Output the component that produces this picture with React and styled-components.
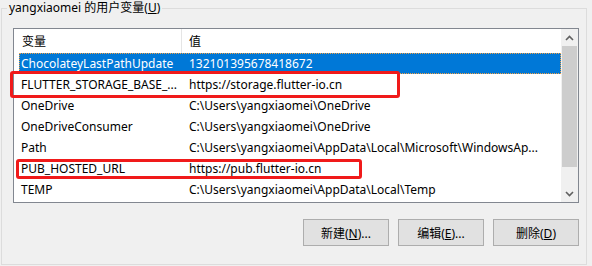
import React from 'react';
import styled, { createGlobalStyle } from 'styled-components';

const GlobalStyle = createGlobalStyle`
  html, body {
    margin: 0;
    padding: 0;
    background: #f0f0f0;
  }
  body {
    font-family: "Noto Sans", "Noto Sans CJK SC", sans-serif;
    font-size: 12px;
    color: #000;
  }
`;

const Group = styled.fieldset`
  box-sizing: border-box;
  margin: 0 0 0 1px;
  width: 586px;
  height: 265px;
  padding: 12px 7px 0 11px;
  border: 1px solid #dcdcdc;
  min-width: 0;
`;

const Title = styled.legend`
  margin-left: -6px;
  padding: 0 2px;
  line-height: 16px;
  font-size: 12px;
`;

const Key = styled.span`
  text-decoration: underline;
`;

const ListBox = styled.div`
  box-sizing: border-box;
  display: flex;
  width: 566px;
  height: 175px;
  border: 1px solid #828790;
  background: #fff;
`;

const ListBody = styled.div`
  flex: 1;
  min-width: 0;
`;

const Header = styled.div`
  display: flex;
  height: 24px;
`;

const HeadCell = styled.div`
  box-sizing: border-box;
  display: flex;
  align-items: center;
  width: ${p => p.$w};
  padding-left: ${p => p.$pad}px;
  border-right: ${p => (p.$sep ? '1px solid #e5e5e5' : 'none')};
  flex: ${p => (p.$grow ? 1 : 'none')};
`;

const Row = styled.div`
  position: relative;
  display: flex;
  align-items: center;
  height: 21px;
  margin-left: 5px;
  background: ${p => (p.$selected ? '#0078d7' : 'transparent')};
  color: ${p => (p.$selected ? '#fff' : '#000')};
  outline: ${p => (p.$selected ? '1px dotted #f0a045' : 'none')};
  outline-offset: -1px;
`;

const NameCell = styled.div`
  box-sizing: border-box;
  width: 163px;
  padding-left: 2px;
  white-space: nowrap;
  overflow: hidden;
`;

const ValueCell = styled.div`
  flex: 1;
  padding-left: 7px;
  white-space: nowrap;
  overflow: hidden;
`;

const Mark = styled.div`
  position: absolute;
  left: ${p => p.$left}px;
  top: ${p => p.$top}px;
  width: ${p => p.$w}px;
  height: ${p => p.$h}px;
  box-sizing: border-box;
  border: 3px solid #f01a1a;
  border-radius: 3px;
  pointer-events: none;
`;

const ScrollBar = styled.div`
  width: 17px;
  display: flex;
  flex-direction: column;
  background: #f0f0f0;
`;

const ArrowButton = styled.div`
  height: 17px;
  display: flex;
  align-items: center;
  justify-content: center;
`;

const Thumb = styled.div`
  height: 121px;
  margin: 0 1px;
  background: #cdcdcd;
`;

const Track = styled.div`
  flex: 1;
`;

const Buttons = styled.div`
  display: flex;
  justify-content: flex-end;
  gap: 9px;
  margin-top: 16px;
`;

const Button = styled.button`
  box-sizing: border-box;
  width: 86px;
  height: 27px;
  padding: 0;
  border: 1px solid #adadad;
  background: #e1e1e1;
  font-family: inherit;
  font-size: 12px;
  color: #000;
`;

const Chevron = ({ up }) => (
  <svg width="9" height="6" viewBox="0 0 9 6">
    <polyline
      points={up ? '1,5 4.5,1.5 8,5' : '1,1 4.5,4.5 8,1'}
      fill="none"
      stroke="#606060"
      strokeWidth="1.6"
    />
  </svg>
);

const vars = [
  { name: 'ChocolateyLastPathUpdate', value: '132101395678418672', selected: true },
  { name: 'FLUTTER_STORAGE_BASE_...', value: 'https://storage.flutter-io.cn', mark: { left: -9, top: -3, w: 390, h: 27 } },
  { name: 'OneDrive', value: 'C:\\Users\\yangxiaomei\\OneDrive' },
  { name: 'OneDriveConsumer', value: 'C:\\Users\\yangxiaomei\\OneDrive' },
  { name: 'Path', value: 'C:\\Users\\yangxiaomei\\AppData\\Local\\Microsoft\\WindowsAp...' },
  { name: 'PUB_HOSTED_URL', value: 'https://pub.flutter-io.cn', mark: { left: -3, top: 1, w: 346, h: 20 } },
  { name: 'TEMP', value: 'C:\\Users\\yangxiaomei\\AppData\\Local\\Temp' },
];

export default function App() {
  return (
    <>
      <GlobalStyle />
      <Group>
        <Title>
          yangxiaomei 的用户变量(<Key>U</Key>)
        </Title>
        <ListBox>
          <ListBody>
            <Header>
              <HeadCell $w="168px" $pad={8} $sep>变量</HeadCell>
              <HeadCell $pad={7} $grow>值</HeadCell>
            </Header>
            {vars.map(v => (
              <Row key={v.name} $selected={v.selected}>
                <NameCell>{v.name}</NameCell>
                <ValueCell>{v.value}</ValueCell>
                {v.mark && (
                  <Mark $left={v.mark.left} $top={v.mark.top} $w={v.mark.w} $h={v.mark.h} />
                )}
              </Row>
            ))}
          </ListBody>
          <ScrollBar>
            <ArrowButton><Chevron up /></ArrowButton>
            <Thumb />
            <Track />
            <ArrowButton><Chevron /></ArrowButton>
          </ScrollBar>
        </ListBox>
        <Buttons>
          <Button>新建(<Key>N</Key>)...</Button>
          <Button>编辑(<Key>E</Key>)...</Button>
          <Button>删除(<Key>D</Key>)</Button>
        </Buttons>
      </Group>
    </>
  );
}
